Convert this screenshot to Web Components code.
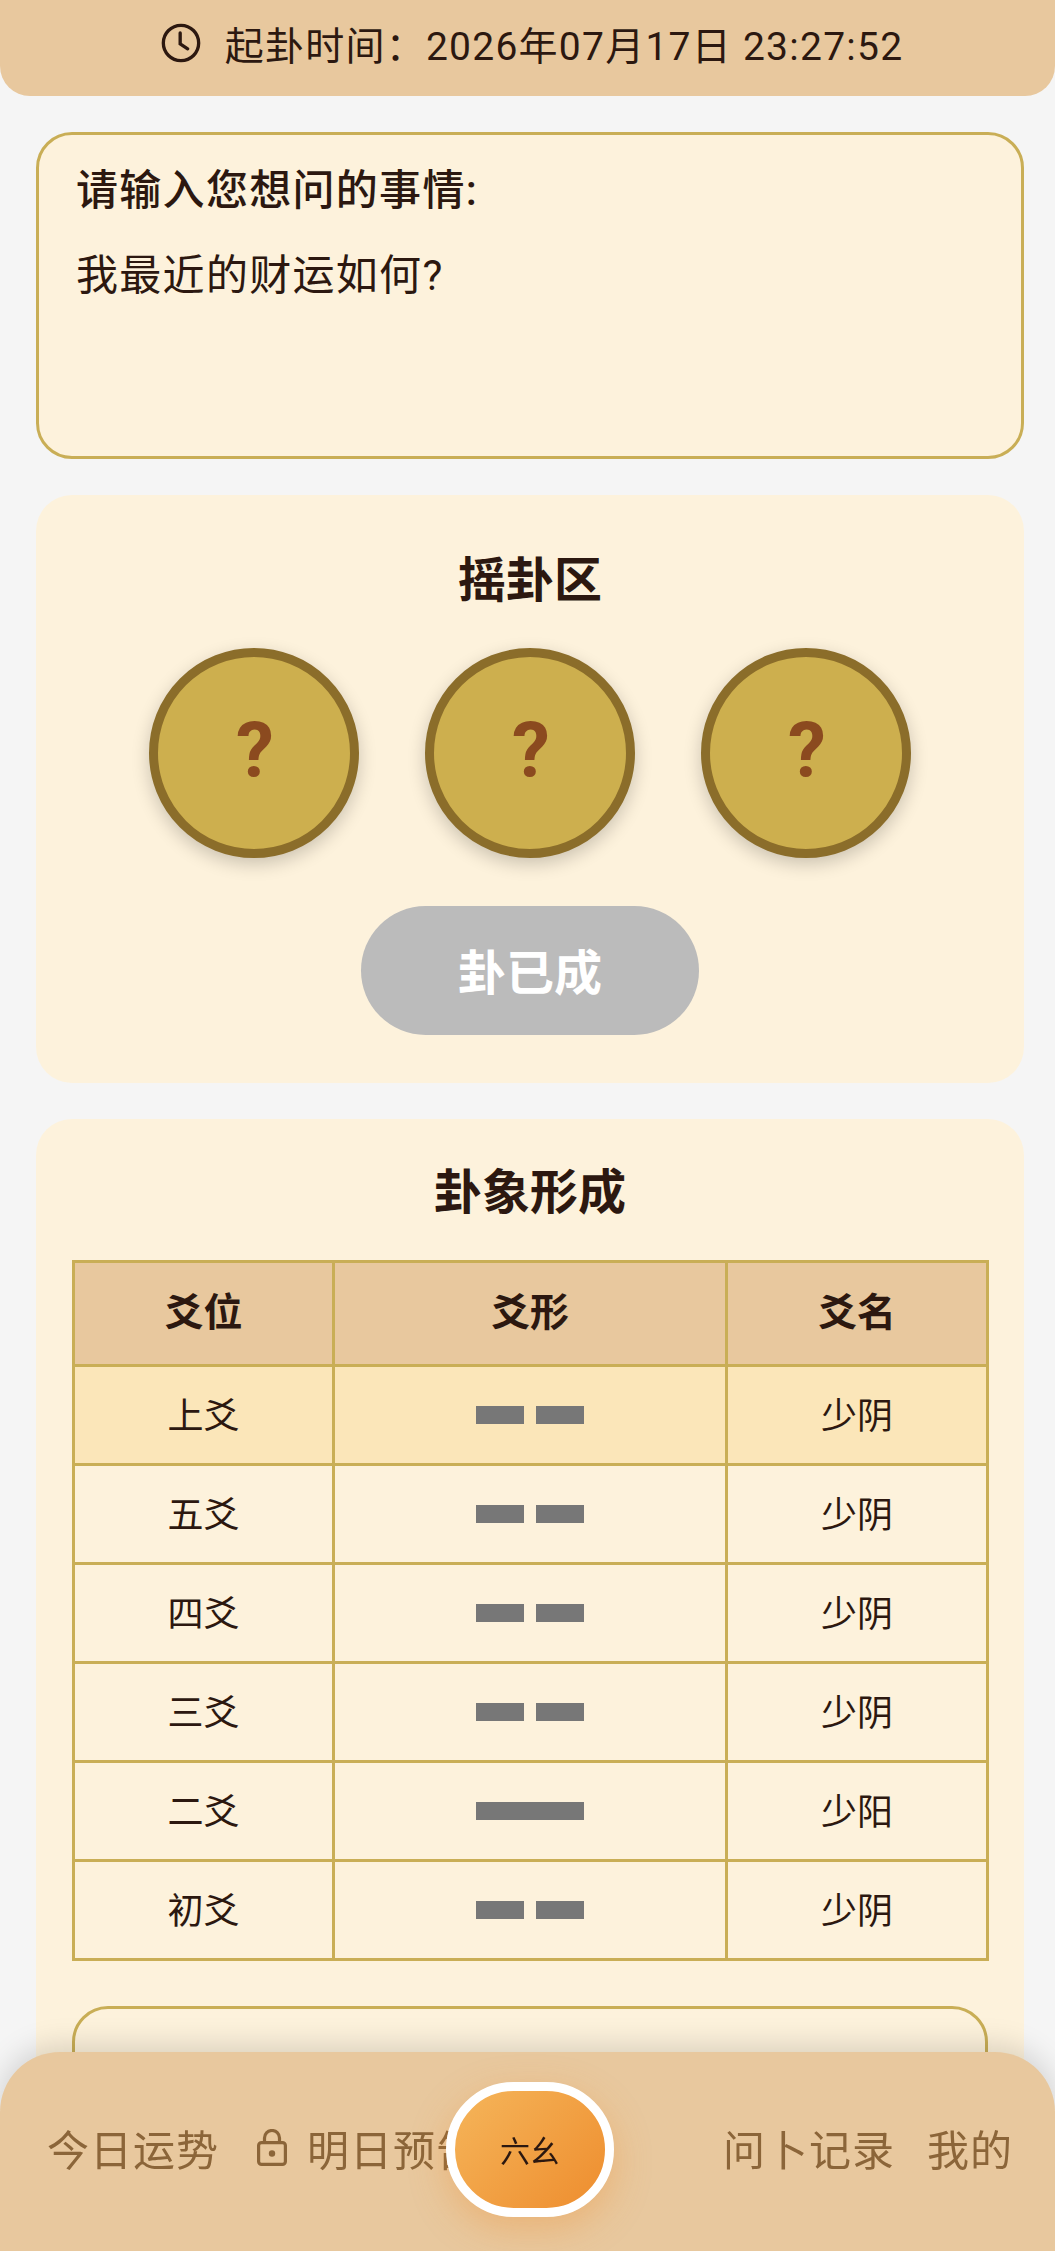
<!DOCTYPE html>
<html lang="zh-CN">
<head>
<meta charset="utf-8">
<title>六幺</title>
<style>
	html, body { margin: 0; height: 2251px; overflow: hidden; }
	body {
		background: #f5f5f5;
		color: #2c1810;
		font-family: Roboto, "Noto Sans CJK SC", sans-serif;
	}
	main {
		display: flex;
		flex-direction: column;
		gap: 36px;
		padding: 36px 31px 0 36px;
	}
</style>
</head>
<body>
<app-header>起卦时间：2026年07月17日 23:27:52</app-header>
<main>
	<ask-box label="请输入您想问的事情:">我最近的财运如何?</ask-box>
	<shake-panel title-text="摇卦区" action="卦已成">
		<coin-face></coin-face>
		<coin-face></coin-face>
		<coin-face></coin-face>
	</shake-panel>
	<hexagram-panel></hexagram-panel>
</main>
<app-nav></app-nav>

<script>
const html = String.raw;

const CJK_STACK = `Roboto, "Noto Sans CJK SC", sans-serif`;

function shadow(el, markup) {
	el.attachShadow({ mode: "open" }).innerHTML = markup;
}

class AppHeader extends HTMLElement {
	constructor() {
		super();
		shadow(this, html`
			<style>
				:host {
					display: flex;
					align-items: center;
					justify-content: center;
					gap: 24px;
					height: 96px;
					padding: 0 0 10px 9px;
					box-sizing: border-box;
					background: #e8c89e;
					border-radius: 0 0 30px 30px;
					font-size: 39px;
					letter-spacing: 1.25px;
					color: #2c1810;
				}
				svg { width: 40px; height: 40px; flex: none; }
			</style>
			<svg viewBox="0 0 24 24" fill="none" stroke="#2c1810" stroke-width="2" stroke-linecap="round">
				<circle cx="12" cy="12" r="10.6"/>
				<path d="M11.5 6v6.5l4.5 3"/>
			</svg>
			<span><slot></slot></span>
		`);
	}
}

class AskBox extends HTMLElement {
	constructor() {
		super();
		shadow(this, html`
			<style>
				:host {
					display: block;
					height: 327px;
					box-sizing: border-box;
					padding: 32px 37px;
					background: #fdf2dc;
					border: 3px solid #c9ae56;
					border-radius: 36px;
					font-size: 42px;
					line-height: 48px;
					letter-spacing: 1.3px;
				}
				.label { margin-bottom: 37px; font-weight: 500; }
			</style>
			<div class="label">${this.getAttribute("label")}</div>
			<div><slot></slot></div>
		`);
	}
}

class ShakePanel extends HTMLElement {
	constructor() {
		super();
		shadow(this, html`
			<style>
				:host {
					display: flex;
					flex-direction: column;
					align-items: center;
					padding: 50px 0 48px;
					background: #fdf2dc;
					border-radius: 36px;
				}
				h2 {
					margin: 0 0 31px;
					font-size: 48px;
					line-height: 72px;
					font-weight: 700;
				}
				.coins { display: flex; gap: 66px; margin-bottom: 48px; }
				button {
					width: 338px;
					height: 129px;
					padding: 0 0 3px;
					border: 0;
					border-radius: 65px;
					background: #bbb;
					color: #fff;
					font: 700 48px ${CJK_STACK};
				}
			</style>
			<h2>${this.getAttribute("title-text")}</h2>
			<div class="coins"><slot></slot></div>
			<button disabled>${this.getAttribute("action")}</button>
		`);
	}
}

class CoinFace extends HTMLElement {
	constructor() {
		super();
		shadow(this, html`
			<style>
				:host {
					display: flex;
					align-items: center;
					justify-content: center;
					width: 210px;
					height: 210px;
					box-sizing: border-box;
					padding: 0 0 6px 2px;
					border: 9px solid #8b6d2a;
					border-radius: 50%;
					background: #cdaf4e;
					box-shadow: 0 6px 18px rgba(0, 0, 0, 0.2);
					color: #8b4a1f;
					font-size: 76px;
					font-weight: 700;
				}
			</style>
			?
		`);
	}
}

const ROWS = [
	["上爻", "yin", "少阴"],
	["五爻", "yin", "少阴"],
	["四爻", "yin", "少阴"],
	["三爻", "yin", "少阴"],
	["二爻", "yang", "少阳"],
	["初爻", "yin", "少阴"],
];

class HexagramPanel extends HTMLElement {
	constructor() {
		super();
		const rows = ROWS.map(
			([pos, kind, name], i) => html`
				<tr class="${i === 0 ? "current" : ""}">
					<td class="text">${pos}</td>
					<td><div class="line ${kind}"><i></i>${kind === "yin" ? "<i></i>" : ""}</div></td>
					<td class="text">${name}</td>
				</tr>`,
		).join("");
		shadow(this, html`
			<style>
				:host {
					display: block;
					padding: 38px 36px 0 36px;
					background: #fdf2dc;
					border-radius: 36px 36px 0 0;
				}
				h2 {
					margin: 0 0 31px;
					text-align: center;
					font-size: 48px;
					line-height: 72px;
					font-weight: 700;
				}
				table {
					width: 914px;
					table-layout: fixed;
					border-collapse: collapse;
					text-align: center;
				}
				th, td { border: 3px solid #c9ae56; padding: 0; }
				th {
					height: 104px;
					padding-bottom: 9px;
					box-sizing: border-box;
					background: #e8c89e;
					font-size: 39px;
					font-weight: 700;
				}
				td { height: 96px; font-size: 36px; }
				td.text { padding-bottom: 4px; box-sizing: border-box; }
				tr.current td { background: #fbe6b9; }
				.line { display: flex; justify-content: center; gap: 12px; }
				.line i { display: block; width: 48px; height: 18px; background: #777; }
				.line.yang i { width: 108px; }
				.box {
					height: 300px;
					margin-top: 45px;
					box-sizing: border-box;
					width: 916px;
					border: 3px solid #c9ae56;
					border-radius: 36px;
				}
			</style>
			<h2>卦象形成</h2>
			<table>
				<colgroup><col style="width:260px"><col style="width:393px"><col style="width:261px"></colgroup>
				<thead><tr><th>爻位</th><th>爻形</th><th>爻名</th></tr></thead>
				<tbody>${rows}</tbody>
			</table>
			<div class="box"></div>
		`);
	}
}

class AppNav extends HTMLElement {
	constructor() {
		super();
		shadow(this, html`
			<style>
				:host {
					position: fixed;
					left: 0;
					right: 0;
					bottom: 0;
					height: 199px;
					display: flex;
					align-items: center;
					box-sizing: border-box;
					padding: 0 42px 8px 47px;
					background: #e8c89e;
					border-radius: 60px 60px 0 0;
					box-shadow: 0 -6px 30px rgba(0, 0, 0, 0.15);
					font-size: 42px;
					letter-spacing: 1px;
					color: #8b6539;
				}
				.item { white-space: nowrap; }
				.locked { display: flex; align-items: center; gap: 20px; margin-left: 38px; }
				.locked svg { width: 30px; height: 37px; flex: none; }
				.right { margin-left: auto; display: flex; gap: 32px; }
				.center {
					position: absolute;
					left: 446px;
					top: 30px;
					width: 168px;
					height: 135px;
					box-sizing: border-box;
					display: flex;
					align-items: center;
					justify-content: center;
					padding-bottom: 2px;
					border: 9px solid #fff;
					border-radius: 68px;
					background: linear-gradient(135deg, #f5b55a, #ee8d2e);
					box-shadow: 0 12px 36px rgba(238, 141, 46, 0.35);
					font-size: 30px;
					letter-spacing: 0;
					color: #2c1810;
				}
			</style>
			<div class="item">今日运势</div>
			<div class="item locked">
				<svg viewBox="0 0 30 37" fill="none" stroke="#8b6539" stroke-width="3.2">
					<rect x="1.6" y="13.6" width="26.8" height="21.8" rx="3"/>
					<path d="M7.5 13.5V9a7.5 7.5 0 0 1 15 0v4.5"/>
					<circle cx="15" cy="24.5" r="3.2" fill="#8b6539" stroke="none"/>
				</svg>
				明日预告
			</div>
			<div class="right">
				<div class="item">问卜记录</div>
				<div class="item">我的</div>
			</div>
			<div class="center">六幺</div>
		`);
	}
}

customElements.define("app-header", AppHeader);
customElements.define("ask-box", AskBox);
customElements.define("shake-panel", ShakePanel);
customElements.define("coin-face", CoinFace);
customElements.define("hexagram-panel", HexagramPanel);
customElements.define("app-nav", AppNav);
</script>
</body>
</html>
